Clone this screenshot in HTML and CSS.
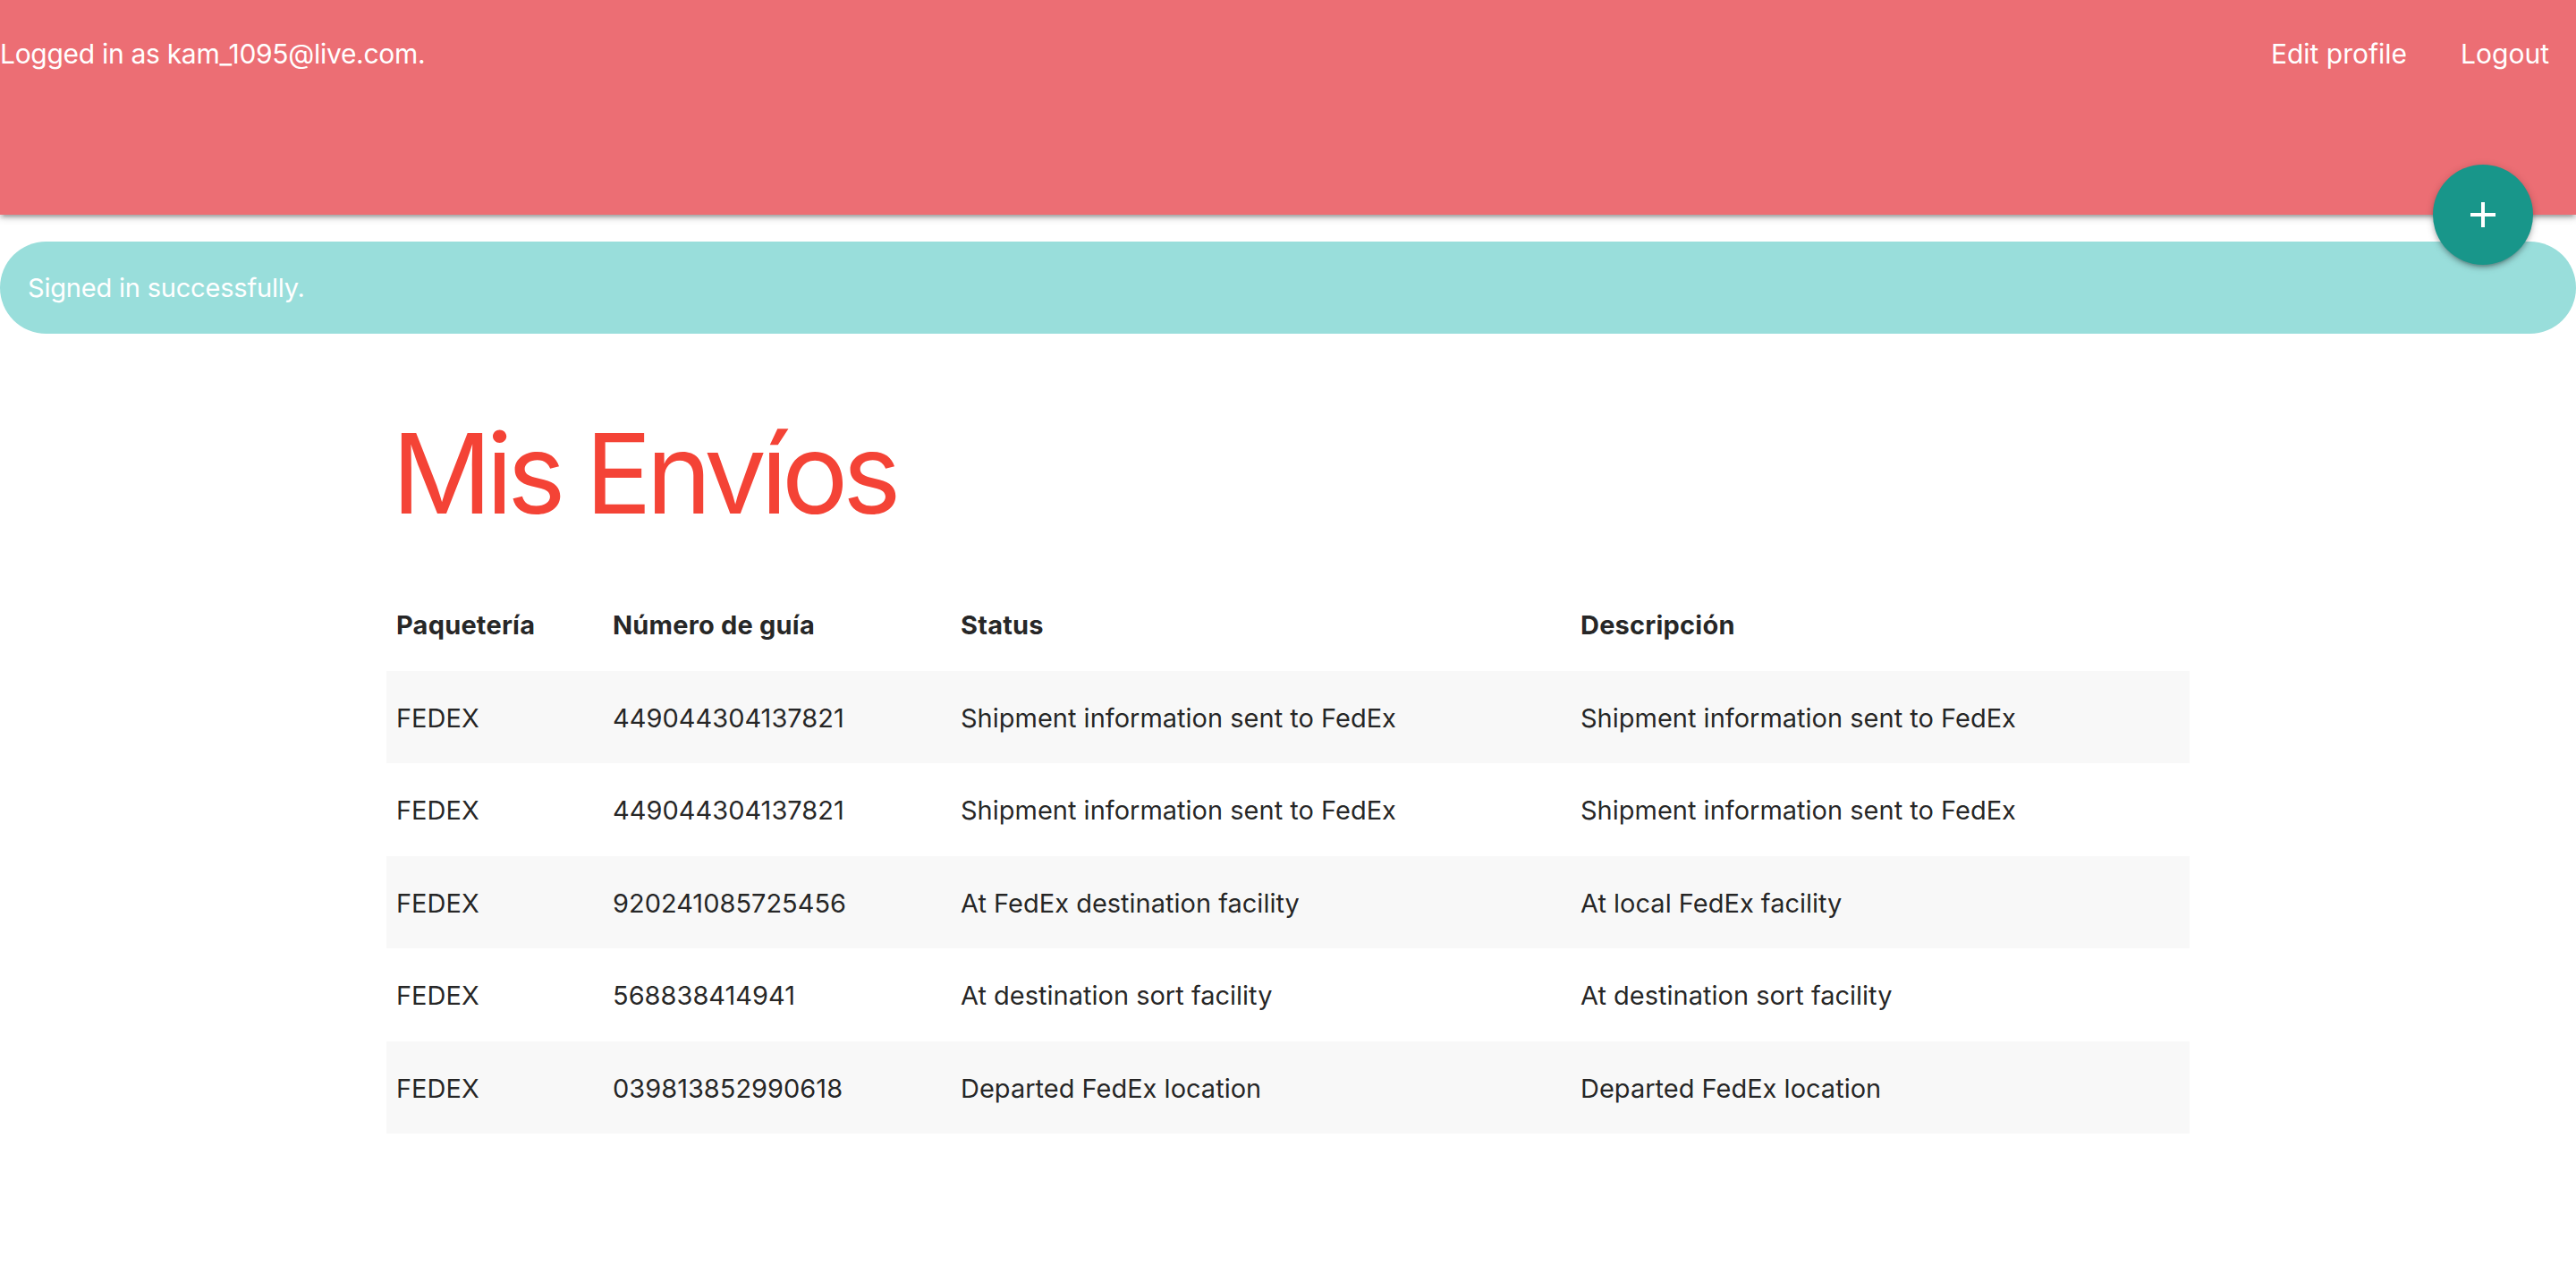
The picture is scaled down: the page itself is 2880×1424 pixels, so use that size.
FILE: index.html
```html
<!DOCTYPE html>
<html lang="es">
<head>
<meta charset="utf-8">
<title>Mis Envíos</title>
<link rel="stylesheet" href="styles.css">
</head>
<body>
<header class="topbar">
  <span class="user-info">Logged in as <strong>kam_1095@live.com</strong>.</span>
  <ul class="nav-links">
    <li><a href="#">Edit profile</a></li>
    <li><a href="#">Logout</a></li>
  </ul>
  <a class="fab" href="#" aria-label="Add">
    <svg viewBox="0 0 24 24" width="48" height="48"><path d="M19 13h-6v6h-2v-6H5v-2h6V5h2v6h6v2z" fill="#fff"/></svg>
  </a>
</header>
<div class="flash">Signed in successfully.</div>
<main class="container">
  <h1 class="title">Mis Envíos</h1>
  <table class="shipments">
    <thead>
      <tr>
        <th class="col-carrier">Paquetería</th>
        <th class="col-guide">Número de guía</th>
        <th class="col-status">Status</th>
        <th class="col-desc">Descripción</th>
      </tr>
    </thead>
    <tbody>
      <tr><td>FEDEX</td><td>449044304137821</td><td>Shipment information sent to FedEx</td><td>Shipment information sent to FedEx</td></tr>
      <tr><td>FEDEX</td><td>449044304137821</td><td>Shipment information sent to FedEx</td><td>Shipment information sent to FedEx</td></tr>
      <tr><td>FEDEX</td><td>920241085725456</td><td>At FedEx destination facility</td><td>At local FedEx facility</td></tr>
      <tr><td>FEDEX</td><td>568838414941</td><td>At destination sort facility</td><td>At destination sort facility</td></tr>
      <tr><td>FEDEX</td><td>039813852990618</td><td>Departed FedEx location</td><td>Departed FedEx location</td></tr>
    </tbody>
  </table>
</main>
</body>
</html>
```

FILE: styles.css
```css
* { box-sizing: border-box; }

html, body {
  margin: 0;
  padding: 0;
  background: #fff;
}

body {
  font-family: Inter, "Noto Sans", "Liberation Sans", sans-serif;
  color: rgba(0, 0, 0, 0.87);
}

.topbar {
  position: relative;
  height: 240px;
  background: #ec6e74;
  color: #fff;
  display: flex;
  justify-content: space-between;
  align-items: flex-start;
  box-shadow: 0 4px 4px 0 rgba(0,0,0,0.14), 0 6px 2px -4px rgba(0,0,0,0.12), 0 2px 10px 0 rgba(0,0,0,0.2);
  z-index: 2;
}

.user-info {
  font-size: 30px;
  line-height: 120px;
  letter-spacing: -0.3px;
  white-space: nowrap;
}

.user-info strong {
  font-weight: 400;
}

.nav-links {
  list-style: none;
  margin: 0;
  padding: 0;
  display: flex;
}

.nav-links a {
  display: block;
  padding: 0 30px;
  color: #fff;
  text-decoration: none;
  font-size: 30px;
  line-height: 120px;
}

.fab {
  position: absolute;
  right: 48px;
  bottom: -56px;
  width: 112px;
  height: 112px;
  border-radius: 50%;
  background: #18968a;
  display: flex;
  align-items: center;
  justify-content: center;
  box-shadow: 0 4px 4px 0 rgba(0,0,0,0.14), 0 6px 2px -4px rgba(0,0,0,0.12), 0 2px 10px 0 rgba(0,0,0,0.2);
}

.flash {
  margin-top: 30px;
  height: 103px;
  border-radius: 52px;
  background: #99dedb;
  color: #fff;
  font-size: 29px;
  letter-spacing: -0.2px;
  padding-left: 31px;
  display: flex;
  align-items: center;
}

.container {
  width: 2016px;
  margin: 0 auto;
}

.title {
  margin: 88px 0 49px 0;
  font-size: 124px;
  font-weight: 400;
  line-height: 1.1;
  letter-spacing: -6.5px;
  color: #f44336;
  padding-left: 6px;
}

.shipments {
  width: 100%;
  table-layout: fixed;
  border-collapse: collapse;
  font-size: 29px;
  line-height: 1.5;
}

.shipments th,
.shipments td {
  text-align: left;
  padding: 31px 10px 29px 11px;
  vertical-align: middle;
}

.shipments th {
  font-weight: 700;
  letter-spacing: 0.2px;
}

.col-carrier { width: 242px; }
.col-guide { width: 389px; }
.col-status { width: 693px; }

.shipments tbody tr:nth-child(odd) {
  background: #f8f8f8;
}
```
